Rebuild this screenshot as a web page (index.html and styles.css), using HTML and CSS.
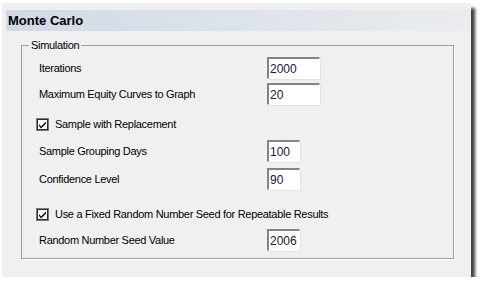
FILE: index.html
```html
<!DOCTYPE html>
<html lang="en">

<head>
    <meta charset="UTF-8">
    <title>Monte Carlo</title>
    <link rel="stylesheet" href="styles.css">
</head>

<body>
    <div class="panel">
        <div class="header">Monte Carlo</div>

        <div class="group">
            <span class="legend">Simulation</span>

            <div class="row first">
                <label class="label" for="iterations">Iterations</label>
                <input class="field wide" type="text" id="iterations" value="2000">
            </div>
            <div class="row">
                <label class="label" for="curves">Maximum Equity Curves to Graph</label>
                <input class="field wide" type="text" id="curves" value="20">
            </div>

            <div class="row check-row gap-md">
                <svg class="check" width="13" height="13" viewBox="0 0 13 13">
                    <rect x="0.5" y="0.5" width="12" height="12" fill="#fff" stroke="#7a7a7a" />
                    <rect x="1.5" y="1.5" width="10" height="10" fill="none" stroke="#2b2b2b" />
                    <path d="M3 6 L5 8.5 L10 3.5 L10 5.5 L5 10.5 L3 8 Z" fill="#000" />
                </svg>
                <span>Sample with Replacement</span>
            </div>

            <div class="row gap-sm">
                <label class="label" for="grouping">Sample Grouping Days</label>
                <input class="field narrow" type="text" id="grouping" value="100">
            </div>
            <div class="row gap-sm2">
                <label class="label" for="confidence">Confidence Level</label>
                <input class="field narrow" type="text" id="confidence" value="90">
            </div>

            <div class="row check-row gap-lg">
                <svg class="check" width="13" height="13" viewBox="0 0 13 13">
                    <rect x="0.5" y="0.5" width="12" height="12" fill="#fff" stroke="#7a7a7a" />
                    <rect x="1.5" y="1.5" width="10" height="10" fill="none" stroke="#2b2b2b" />
                    <path d="M3 6 L5 8.5 L10 3.5 L10 5.5 L5 10.5 L3 8 Z" fill="#000" />
                </svg>
                <span>Use a Fixed Random Number Seed for Repeatable Results</span>
            </div>

            <div class="row">
                <label class="label" for="seed">Random Number Seed Value</label>
                <input class="field narrow" type="text" id="seed" value="2006">
            </div>
        </div>
    </div>
</body>

</html>
```

FILE: styles.css
```css
body {
    margin: 0;
    padding: 0;
    background-color: #fff;
    font-family: "Liberation Sans", Arial, sans-serif;
}

.panel {
    width: 469px;
    height: 274px;
    margin: 3px 0 0 2px;
    padding-top: 7px;
    box-sizing: border-box;
    background-color: #f0f0f0;
    box-shadow: 4px 5px 3px rgba(0, 0, 0, 0.75);
}

.header {
    height: 21px;
    margin-left: 4px;
    padding-left: 2px;
    background: linear-gradient(to right, #d1dae5, #dde3ea 50%, #eaecef);
    font-size: 13px;
    font-weight: bold;
    line-height: 22px;
    color: #000;
}

.group {
    width: 433px;
    height: 214px;
    margin: 14px 0 0 19px;
    box-sizing: border-box;
    border: 1px solid #a0a0a0;
    box-shadow: 1px 1px 0 #fff;
    padding-top: 11px;
}

.legend {
    display: block;
    width: max-content;
    margin: -18px 0 5px 7px;
    padding: 0 2px;
    background-color: #f0f0f0;
    font-size: 11px;
    letter-spacing: -0.3px;
    line-height: 13px;
    color: #000;
}

.row {
    display: flex;
    align-items: center;
    height: 22px;
    margin-top: 4px;
    padding-left: 17px;
    font-size: 11px;
    letter-spacing: -0.3px;
    color: #000;
}

.row.first {
    margin-top: 0;
}

.row.gap-md {
    margin-top: 8px;
}

.row.gap-sm {
    margin-top: 5px;
}

.row.gap-sm2 {
    margin-top: 6px;
}

.row.gap-lg {
    margin-top: 13px;
}

.label {
    width: 228px;
}

.check-row {
    padding-left: 14px;
}

.check {
    margin-right: 6px;
    flex: none;
}

.field {
    height: 22px;
    box-sizing: border-box;
    margin: 0;
    padding: 0 0 0 1px;
    border-style: solid;
    border-width: 2px 1px 1px 2px;
    border-color: #848484 #fff #fff #848484;
    box-shadow: 1px 1px 0 #e3e3e3;
    background-color: #fff;
    font-family: "Liberation Sans", Arial, sans-serif;
    font-size: 12px;
    color: #10203a;
    outline: none;
}

.wide {
    width: 53px;
}

.narrow {
    width: 33px;
}
```
